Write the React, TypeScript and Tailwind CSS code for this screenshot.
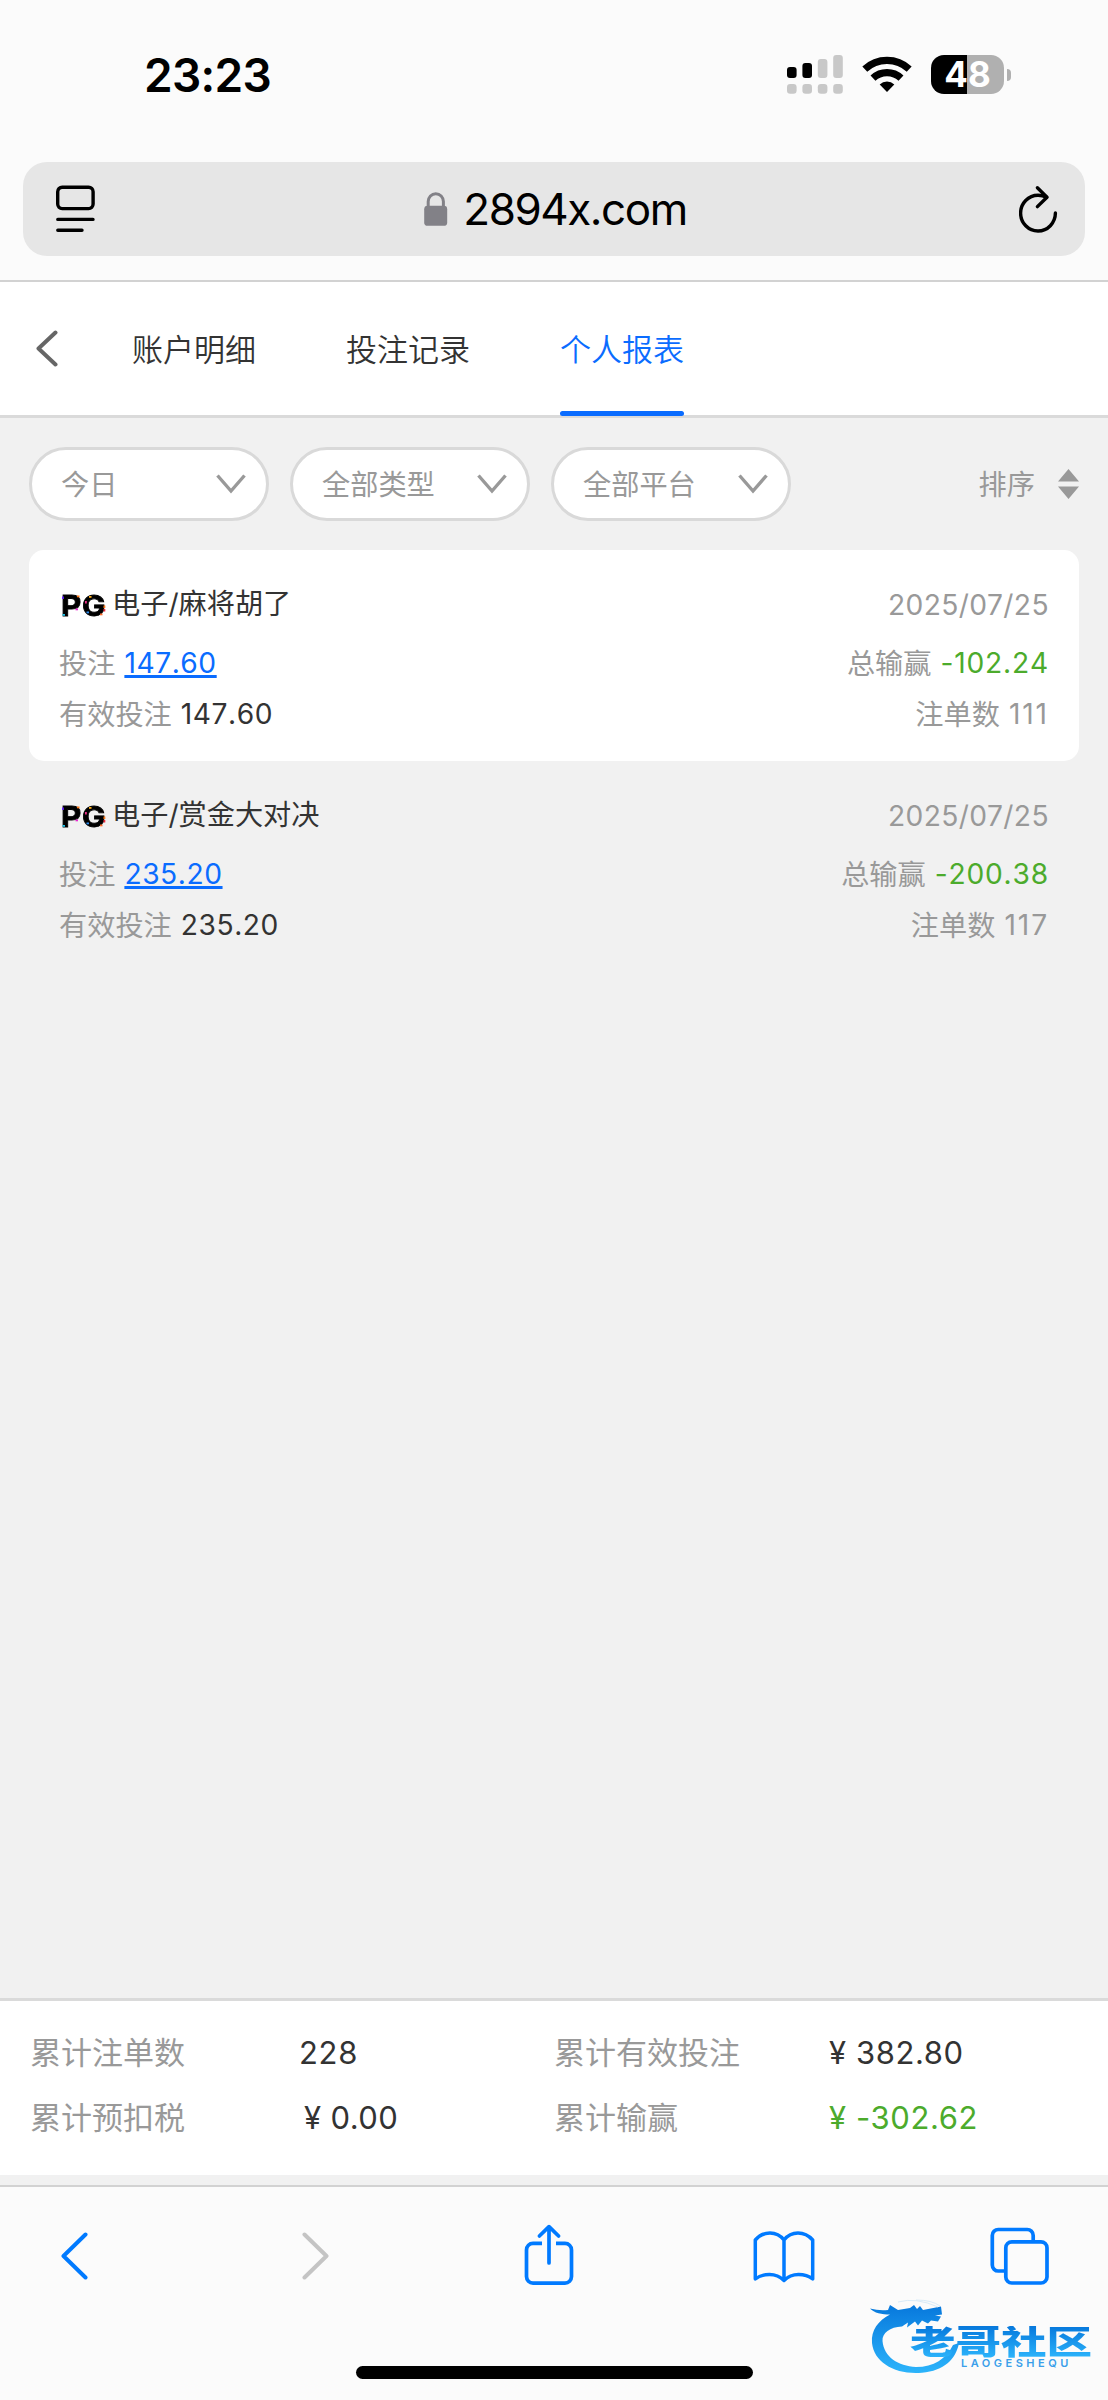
import React from 'react';

interface ReportItem {
  id: number;
  name: string;
  date: string;
  bet: string;
  validBet: string;
  winLoss: string;
  count: number;
}

const TABS = ['账户明细', '投注记录', '个人报表'];

const FILTERS = ['今日', '全部类型', '全部平台'];

const REPORTS: ReportItem[] = [
  { id: 1, name: '电子/麻将胡了', date: '2025/07/25', bet: '147.60', validBet: '147.60', winLoss: '-102.24', count: 111 },
  { id: 2, name: '电子/赏金大对决', date: '2025/07/25', bet: '235.20', validBet: '235.20', winLoss: '-200.38', count: 117 },
];

const StatusBar: React.FC = () => (
  <div className="flex h-[162px] items-start justify-between pl-[144px] pr-[97px] pt-[48px]">
    <span className="text-[46px] font-semibold leading-[55px] tracking-[-0.7px] text-black">23:23</span>
    <div className="flex items-start pt-[7px]">
      {/* Signal */}
      <svg width="56" height="39" viewBox="0 0 56 39" fill="#c8c8c8">
        <rect x="0" y="12" width="9.6" height="11" rx="3" fill="#000" />
        <rect x="15.4" y="8" width="9.6" height="15" rx="3" fill="#000" />
        <rect x="30.8" y="4" width="9.6" height="19" rx="3" />
        <rect x="46.2" y="0" width="9.6" height="23" rx="3" />
        <rect x="0" y="29" width="9.6" height="9.8" rx="3.2" />
        <rect x="15.4" y="29" width="9.6" height="9.8" rx="3.2" />
        <rect x="30.8" y="29" width="9.6" height="9.8" rx="3.2" />
        <rect x="46.2" y="29" width="9.6" height="9.8" rx="3.2" />
      </svg>
      {/* Wifi */}
      <svg className="ml-[19px]" width="50" height="38" viewBox="0 0 50 38">
        <path d="M2.8 14.2a32.5 32.5 0 0 1 44.4 0" fill="none" stroke="#000" strokeWidth="7.2" />
        <path d="M11 23.2a20.5 20.5 0 0 1 28 0" fill="none" stroke="#000" strokeWidth="7.2" />
        <path d="M25 37l-7.3-7.6a10.6 10.6 0 0 1 14.6 0z" fill="#000" />
      </svg>
      {/* Battery */}
      <div className="ml-[19px] flex items-center">
        <div className="flex h-[39px] w-[73px] items-center justify-center rounded-[13px] bg-[linear-gradient(90deg,#000_0,#000_36px,#b0b0b0_36px)] text-[35px] font-bold leading-none text-white">
          48
        </div>
        <div className="ml-[3px] h-[12px] w-[4px] rounded-r-full bg-[#b0b0b0]" />
      </div>
    </div>
  </div>
);

const AddressBar: React.FC = () => (
  <div className="mx-[23px] flex h-[94px] items-center justify-between rounded-[24px] bg-[#e6e6e6] pl-[33px] pr-[27px]">
    <svg width="39" height="48" viewBox="0 0 39 48" fill="none" stroke="#000" strokeWidth="3.4" strokeLinecap="round">
      <rect x="1.7" y="2.2" width="35.4" height="21.4" rx="4.5" />
      <path d="M1.8 34.4h35.2M1.8 45.2h24.2" />
    </svg>
    <div className="flex items-center pr-[3px]">
      <svg width="24" height="34" viewBox="0 0 24 34">
        <path d="M4.2 16V9.6a7.6 7.9 0 0 1 15.2 0V16" fill="none" stroke="#828187" strokeWidth="3" />
        <rect x="0.2" y="13.8" width="23" height="20" rx="3.4" fill="#828187" />
      </svg>
      <span className="ml-[15px] text-[44px] leading-none tracking-[-1.45px] text-black">2894x.com</span>
    </div>
    <svg width="39" height="48" viewBox="0 0 39 48" fill="none" stroke="#000" strokeWidth="3.4" strokeLinecap="round" strokeLinejoin="round">
      <path d="M27.5 12.2Q23.8 10.2 19 10.2A17.4 17.9 0 1 0 36.4 28" />
      <path d="M18.4 2.8l9.6 9.4-9.6 9.4" />
    </svg>
  </div>
);

const PgLogo: React.FC = () => (
  <span className="relative mr-[6px] mt-[3px] inline-flex h-[21px] w-[45px] items-center">
    <span className="inline-block origin-left scale-x-[1.1] text-[28.5px] font-bold leading-[21px] tracking-[0.6px] text-black [-webkit-text-stroke:0.8px_#000]">PG</span>
    <svg className="absolute left-0 top-0" width="46" height="22" viewBox="0 0 46 22">
      <rect x="1" y="1.5" width="1.8" height="2.5" fill="#6a2bff" />
      <rect x="16" y="0.5" width="2.5" height="1.8" fill="#ff7a1a" />
      <rect x="14.5" y="13.5" width="2.5" height="1.8" fill="#e62bd0" />
      <rect x="1.5" y="19" width="2.5" height="1.8" fill="#22c3e6" />
      <rect x="28" y="1" width="2.5" height="1.8" fill="#ffb01a" />
      <rect x="24" y="6" width="1.8" height="2.5" fill="#f0308a" />
      <rect x="42.500" y="10.500" width="1.8" height="2.5" fill="#ff7a1a" />
      <rect x="42.500" y="14" width="1.8" height="2.5" fill="#f02a3c" />
      <rect x="25.500" y="16.500" width="2.5" height="1.8" fill="#2a8cf0" />
      <rect x="39" y="18.500" width="2.5" height="1.8" fill="#ff6a2a" />
    </svg>
  </span>
);

const Label: React.FC<{ text: string }> = ({ text }) => <span className="mr-[9px] align-[-1px]">{text}</span>;

const ReportCard: React.FC<{ item: ReportItem; striped: boolean }> = ({ item, striped }) => (
  <div className={`h-[211px] rounded-[15px] px-[30px] pt-[23px] text-[28.2px] text-[#999] ${striped ? 'bg-white' : ''}`}>
    <div className="flex h-[60px] items-center justify-between">
      <div className="flex items-center pl-[2px] pt-[2px] text-[#333]">
        <PgLogo />
        {item.name}
      </div>
      <span className="pt-[5px] tracking-[0.4px]">{item.date}</span>
    </div>
    <div className="flex h-[60px] items-center justify-between pt-[2px] [font-kerning:none]">
      <div>
        <Label text="投注" />
        <a className="tracking-[0.55px] text-[#0a6cff] underline decoration-[2.6px] underline-offset-[2px] [text-decoration-skip-ink:none]">{item.bet}</a>
      </div>
      <div>
        <Label text="总输赢" />
        <span className="tracking-[0.8px] text-[#4cab2c]">{item.winLoss}</span>
      </div>
    </div>
    <div className="flex h-[43px] items-center justify-between [font-kerning:none]">
      <div>
        <Label text="有效投注" />
        <span className="tracking-[0.55px] text-[#333]">{item.validBet}</span>
      </div>
      <div>
        <Label text="注单数" />
        <span className="tracking-[1.9px]">{item.count}</span>
      </div>
    </div>
  </div>
);

const Toolbar: React.FC = () => (
  <div className="relative h-[215px] border-t-2 border-[#d2d2d2] bg-[#fbfbfb] pt-[37px]">
    <div className="flex h-[64px] items-center pl-[61px] text-[#007aff]">
      <svg width="27" height="48" viewBox="0 0 27 48" fill="none" stroke="currentColor" strokeWidth="4" strokeLinecap="round" strokeLinejoin="round">
        <path d="M24.5 2.5L2.5 24l22 21.5" />
      </svg>
      <svg className="ml-[214px]" width="27" height="48" viewBox="0 0 27 48" fill="none" stroke="#c4c4c4" strokeWidth="4" strokeLinecap="round" strokeLinejoin="round">
        <path d="M2.5 2.5l22 21.5-22 21.5" />
      </svg>
      {/* Share */}
      <svg className="-mt-[2px] ml-[195px]" width="50" height="62" viewBox="0 0 50 62" fill="none" stroke="currentColor" strokeWidth="3.7" strokeLinecap="round" strokeLinejoin="round">
        <path d="M18 19.4H9a6.5 6.5 0 0 0-6.500 6.500v26.700A6.500 6.500 0 0 0 9 59.100h32a6.500 6.500 0 0 0 6.500-6.500V25.900a6.500 6.500 0 0 0-6.500-6.500h-9" strokeLinecap="butt" />
        <path d="M25 39V3M15.400 12L25 2.600 34.600 12" />
      </svg>
      {/* Bookmarks */}
      <svg className="ml-[179px]" width="62" height="53" viewBox="0 0 62 53" fill="none" stroke="currentColor" strokeWidth="3.5" strokeLinecap="round" strokeLinejoin="round">
        <path d="M31 10Q25.500 3 17 3T2.300 10V49Q8 44.500 16.500 44.500T31 50.500Q37 44.500 45.500 44.500T59.700 49V10Q53.500 3 45 3T31 10V50.500" />
      </svg>
      {/* Open tabs */}
      <svg className="ml-[175px]" width="59" height="58" viewBox="0 0 59 58" fill="none" stroke="currentColor" strokeWidth="3.7">
        <path d="M14.500 44H8.500A6 6 0 0 1 2.300 38V8.500A6 6 0 0 1 8.500 2.500H37A6 6 0 0 1 43.200 8.500V14.500" />
        <rect x="15.800" y="14.800" width="41.200" height="41.200" rx="6" />
      </svg>
    </div>
    {/* Home indicator */}
    <div className="mx-auto mt-[78px] h-[13px] w-[397px] rounded-full bg-black" />
    <Watermark />
  </div>
);

const Watermark: React.FC = () => (
  <div className="absolute left-[868px] top-[112px] h-[80px] w-[230px]">
    <svg className="absolute left-0 top-0" width="100" height="80" viewBox="0 0 100 80">
      <defs>
        <linearGradient id="dragon" x1="0" y1="0" x2="0" y2="1">
          <stop offset="0" stopColor="#0778dc" />
          <stop offset="1" stopColor="#2cb4fb" />
        </linearGradient>
      </defs>
      <path
        fill="url(#dragon)"
        d="M2 9.500q9 2.500 18 1.500l2-5 8 5 12-2 4-3 3 4 3-3 3 4 18-3.500 1 8-7 1 6 1-3 5-7-1-3 3-6-3-4 5-3-4-8 6 1-5-6 4C22 28 14 34 14.500 42 16 58 30 67 48 68c18 0 30-8 37-22l6-2C88 60 76 72 54 73.700 28 76 6 64 4 44 3 31 10 22 22 15.500 14 15.500 6 14 2 9.500z"
      />
      <path d="M30 3q18-5 40 5M48 1q16 0 24 6" fill="none" stroke="#d9ebf8" strokeWidth="1" />
    </svg>
    <div className="absolute left-[42px] top-[27px] flex flex-col">
      <span className="origin-left scale-x-[1.38] self-start whitespace-nowrap bg-gradient-to-b from-[#0778dc] to-[#2cb4fb] bg-clip-text text-[33px] font-black leading-[32px] text-transparent">
        老哥社区
      </span>
      <span className="pl-[51px] text-[11px] font-semibold leading-[11px] tracking-[3.5px] text-[#3a9fea]">LAOGESHEQU</span>
    </div>
  </div>
);

const App: React.FC = () => {
  return (
    <div className="flex h-[2400px] w-[1108px] flex-col overflow-hidden bg-[#f1f1f1] font-[Inter,'Noto_Sans_CJK_SC',sans-serif]">
      {/* Browser top */}
      <div className="h-[282px] border-b-2 border-[#d2d2d2] bg-[#fbfbfb]">
        <StatusBar />
        <AddressBar />
      </div>

      {/* Tabs */}
      <div className="flex h-[136px] items-center border-b-[3px] border-[#dadada] bg-white pl-[36px] text-[31px] text-[#333]">
        <svg width="22" height="37" viewBox="0 0 22 37" fill="none" stroke="#666" strokeWidth="4" strokeLinecap="round" strokeLinejoin="round">
          <path d="M19.500 2.500L2.500 18.500l17 16" />
        </svg>
        <div className="ml-[74px] flex h-full gap-[90px] font-[350]">
          {TABS.map((tab) => (
            <div key={tab} className={`relative flex items-center pt-[4px] ${tab === '个人报表' ? 'text-[#0a6cff]' : ''}`}>
              {tab}
              {tab === '个人报表' && <div className="absolute bottom-[-1px] left-0 h-[5px] w-full rounded-full bg-[#0a6cff]" />}
            </div>
          ))}
        </div>
      </div>

      {/* Filters */}
      <div className="flex h-[132px] items-center justify-between px-[29px] text-[28.2px] text-[#999]">
        <div className="flex gap-[21px]">
          {FILTERS.map((label) => (
            <div key={label} className="flex h-[74px] w-[240px] items-center justify-between rounded-full border-[3px] border-[#d9d9d9] bg-white pl-[29px] pr-[20px]">
              <span className="pt-[2px]">{label}</span>
              <svg width="30" height="20" viewBox="0 0 30 20" fill="none" stroke="#999" strokeWidth="3.4">
                <path d="M1.500 1.500L15 17 28.500 1.500" />
              </svg>
            </div>
          ))}
        </div>
        <div className="flex items-center">
          <span className="pt-[2px]">排序</span>
          <svg className="ml-[23px]" width="21" height="30" viewBox="0 0 21 30" fill="#999">
            <path d="M10.500 0L21 12.500H0zM10.500 30L21 17.500H0z" />
          </svg>
        </div>
      </div>

      {/* Report list */}
      <div className="flex-1 px-[29px]">
        {REPORTS.map((item, i) => (
          <ReportCard key={item.id} item={item} striped={i % 2 === 0} />
        ))}
      </div>

      {/* Totals */}
      <div className="mb-[10px] h-[177px] border-t-[3px] border-[#dadada] bg-white pt-[19px] text-[31px] text-[#333]">
        <div className="grid grid-cols-[269px_255px_275px_1fr] pl-[30px] leading-[65px]">
          <span className="text-[#999]">累计注单数</span>
          <span className="tracking-[0.7px]">228</span>
          <span className="text-[#999]">累计有效投注</span>
          <span className="tracking-[0.6px]">¥ 382.80</span>
          <span className="text-[#999]">累计预扣税</span>
          <span className="pl-[5px] tracking-[0.4px]">¥ 0.00</span>
          <span className="text-[#999]">累计输赢</span>
          <span className="tracking-[0.6px] text-[#4cab2c]">¥ -302.62</span>
        </div>
      </div>

      <Toolbar />
    </div>
  );
};

export default App;
